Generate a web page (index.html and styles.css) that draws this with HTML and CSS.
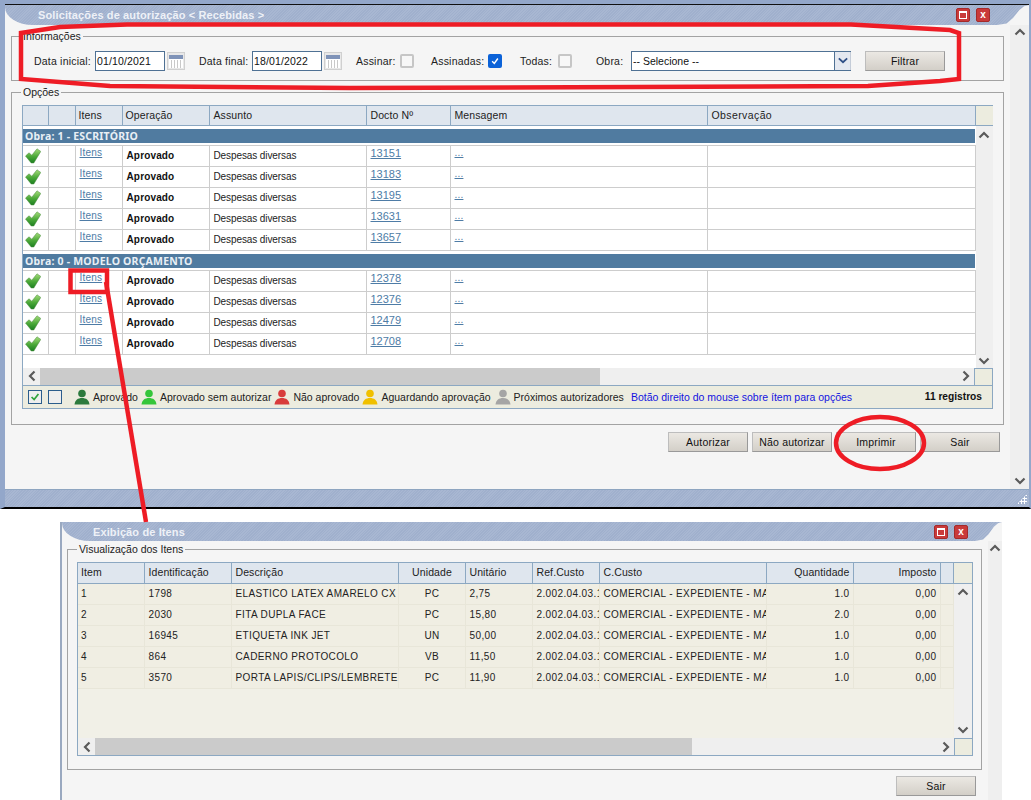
FILE: index.html
```html
<!DOCTYPE html>
<html lang="pt-BR">
<head>
<meta charset="utf-8">
<title>Solicitações de autorização</title>
<link rel="stylesheet" href="styles.css">
</head>
<body>
<svg width="0" height="0" class="defs">
  <defs>
    <linearGradient id="chk" x1="0" y1="0" x2="0" y2="1"><stop offset="0" stop-color="#a5dc7a"/><stop offset=".55" stop-color="#4aa838"/><stop offset="1" stop-color="#1c7f20"/></linearGradient>
    <symbol id="check" viewBox="0 0 16 16"><path d="M.5 8 L4 4.800 L6.800 7.200 L12 .8 L15.800 3.400 L8.800 15 L6.200 15 Z" fill="url(#chk)" stroke="#4b8a40" stroke-width=".5" stroke-linejoin="round"/></symbol>
    <symbol id="cal" viewBox="0 0 18 18"><rect x=".5" y=".5" width="17" height="17" fill="#e8e8e8" stroke="#d0d0d0"/><rect x="2" y="3" width="14" height="13" fill="#fff"/><rect x="2" y="3" width="14" height="4" fill="#7f93b8"/><path d="M4.500 8v8M7.500 8v8M10.500 8v8M13.500 8v8" stroke="#c9c9c9"/></symbol>
    <symbol id="user" viewBox="0 0 16 16"><circle cx="8" cy="4.500" r="3.800"/><path d="M.5 15.500 C1 11 4 9 8 9 S15 11 15.500 15.500 Z"/></symbol>
    <symbol id="up" viewBox="0 0 12 8"><path d="M1.500 6.500 L6 2 L10.500 6.500" fill="none" stroke="#5a5a5a" stroke-width="2.200"/></symbol>
    <symbol id="down" viewBox="0 0 12 8"><path d="M1.500 1.500 L6 6 L10.500 1.500" fill="none" stroke="#5a5a5a" stroke-width="2.200"/></symbol>
    <symbol id="left" viewBox="0 0 8 12"><path d="M6.500 1.500 L2 6 L6.500 10.500" fill="none" stroke="#5a5a5a" stroke-width="2.200"/></symbol>
    <symbol id="right" viewBox="0 0 8 12"><path d="M1.500 1.500 L6 6 L1.500 10.500" fill="none" stroke="#5a5a5a" stroke-width="2.200"/></symbol>
  </defs>
</svg>

<section class="win win-main">
  <header class="titlebar">
    <span class="title">Solicitações de autorização &lt; Recebidas &gt;</span>
    <span class="winbtn"><span class="glyph-max"></span></span>
    <span class="winbtn"><span class="glyph-x">x</span></span>
    <span class="tb-end"></span>
  </header>
  <div class="win-body">
    <div class="win-content">
      <fieldset class="box box-info">
        <legend>Informações</legend>
        <div class="filters">
          <label class="fl fl-1">Data inicial:</label><span class="input date">01/10/2021</span><svg class="cal"><use href="#cal"/></svg>
          <label class="fl fl-2">Data final:</label><span class="input date">18/01/2022</span><svg class="cal"><use href="#cal"/></svg>
          <label class="fl fl-3">Assinar:</label><span class="cb"></span>
          <label class="fl fl-4">Assinadas:</label><span class="cb cb-on"><svg viewBox="0 0 14 14"><path d="M3 7.500 L6 10.500 L11 3.500" fill="none" stroke="#fff" stroke-width="2"/></svg></span>
          <label class="fl fl-5">Todas:</label><span class="cb"></span>
          <label class="fl fl-6">Obra:</label>
          <span class="select"><span class="select-val">-- Selecione --</span><span class="select-arrow"><svg viewBox="0 0 12 8" width="10" height="7"><path d="M1 1.500 L6 6 L11 1.500" fill="none" stroke="#2f4f86" stroke-width="2.200"/></svg></span></span>
          <button class="btn btn-filter">Filtrar</button>
        </div>
      </fieldset>

      <fieldset class="box box-opts">
        <legend>Opções</legend>
        <div class="grid-wrap wrap-main">
          <table class="grid grid-main">
            <colgroup><col class="c25"><col class="c27"><col class="c47"><col class="c87"><col class="c157"><col class="c84"><col class="c257"><col class="c268"><col class="c18"></colgroup>
            <thead><tr><th></th><th></th><th>Itens</th><th>Operação</th><th>Assunto</th><th>Docto Nº</th><th>Mensagem</th><th class="th-obs">Observação</th><th class="corner-th"></th></tr></thead>
            <tbody>
              <tr class="gap gap-top"><td colspan="8"></td><td rowspan="16" class="vs-cell"><div class="vscroll"><svg class="chv"><use href="#up"/></svg><svg class="chv"><use href="#down"/></svg></div></td></tr>
              <tr class="group"><td colspan="8">Obra: 1 - ESCRITÓRIO</td></tr>
              <tr class="gap gap-line"><td colspan="8"></td></tr>
              <tr><td class="ic"><svg class="ok"><use href="#check"/></svg></td><td></td><td class="lk"><a>Itens</a></td><td class="b">Aprovado</td><td>Despesas diversas</td><td class="lk lk-num"><a>13151</a></td><td class="lk"><a>...</a></td><td></td></tr>
              <tr><td class="ic"><svg class="ok"><use href="#check"/></svg></td><td></td><td class="lk"><a>Itens</a></td><td class="b">Aprovado</td><td>Despesas diversas</td><td class="lk lk-num"><a>13183</a></td><td class="lk"><a>...</a></td><td></td></tr>
              <tr><td class="ic"><svg class="ok"><use href="#check"/></svg></td><td></td><td class="lk"><a>Itens</a></td><td class="b">Aprovado</td><td>Despesas diversas</td><td class="lk lk-num"><a>13195</a></td><td class="lk"><a>...</a></td><td></td></tr>
              <tr><td class="ic"><svg class="ok"><use href="#check"/></svg></td><td></td><td class="lk"><a>Itens</a></td><td class="b">Aprovado</td><td>Despesas diversas</td><td class="lk lk-num"><a>13631</a></td><td class="lk"><a>...</a></td><td></td></tr>
              <tr><td class="ic"><svg class="ok"><use href="#check"/></svg></td><td></td><td class="lk"><a>Itens</a></td><td class="b">Aprovado</td><td>Despesas diversas</td><td class="lk lk-num"><a>13657</a></td><td class="lk"><a>...</a></td><td></td></tr>
              <tr class="gap gap-top"><td colspan="8"></td></tr>
              <tr class="group"><td colspan="8">Obra: 0 - MODELO ORÇAMENTO</td></tr>
              <tr class="gap gap-line"><td colspan="8"></td></tr>
              <tr><td class="ic"><svg class="ok"><use href="#check"/></svg></td><td></td><td class="lk"><a>Itens</a></td><td class="b">Aprovado</td><td>Despesas diversas</td><td class="lk lk-num"><a>12378</a></td><td class="lk"><a>...</a></td><td></td></tr>
              <tr><td class="ic"><svg class="ok"><use href="#check"/></svg></td><td></td><td class="lk"><a>Itens</a></td><td class="b">Aprovado</td><td>Despesas diversas</td><td class="lk lk-num"><a>12376</a></td><td class="lk"><a>...</a></td><td></td></tr>
              <tr><td class="ic"><svg class="ok"><use href="#check"/></svg></td><td></td><td class="lk"><a>Itens</a></td><td class="b">Aprovado</td><td>Despesas diversas</td><td class="lk lk-num"><a>12479</a></td><td class="lk"><a>...</a></td><td></td></tr>
              <tr><td class="ic"><svg class="ok"><use href="#check"/></svg></td><td></td><td class="lk"><a>Itens</a></td><td class="b">Aprovado</td><td>Despesas diversas</td><td class="lk lk-num"><a>12708</a></td><td class="lk"><a>...</a></td><td></td></tr>
              <tr class="filler"><td colspan="8"></td></tr>
            </tbody>
          </table>
          <div class="hscroll hs-main">
            <span class="hs-btn"><svg class="chh"><use href="#left"/></svg></span>
            <span class="hs-track"><span class="hs-thumb thumb-main"></span></span>
            <span class="hs-btn"><svg class="chh"><use href="#right"/></svg></span>
            <span class="hs-corner"></span>
          </div>
          <div class="legendbar">
            <span class="lg-cb lg-cb-on"><svg viewBox="0 0 14 14"><path d="M3 7 L6 10 L11 3.500" fill="none" stroke="#2fa33c" stroke-width="2"/></svg></span>
            <span class="lg-cb lg-cb-off"></span>
            <svg class="person p-dg"><use href="#user"/></svg><span class="lg-t">Aprovado</span>
            <svg class="person p-g"><use href="#user"/></svg><span class="lg-t">Aprovado sem autorizar</span>
            <svg class="person p-r"><use href="#user"/></svg><span class="lg-t">Não aprovado</span>
            <svg class="person p-y"><use href="#user"/></svg><span class="lg-t">Aguardando aprovação</span>
            <svg class="person p-gr"><use href="#user"/></svg><span class="lg-t">Próximos autorizadores</span>
            <span class="lg-hint">Botão direito do mouse sobre ítem para opções</span>
            <span class="lg-count">11 registros</span>
          </div>
        </div>
      </fieldset>

      <div class="actions">
        <button class="btn">Autorizar</button>
        <button class="btn">Não autorizar</button>
        <button class="btn">Imprimir</button>
        <button class="btn">Sair</button>
      </div>
    </div>
    <div class="side-scroll"><svg class="chv"><use href="#up"/></svg><svg class="chv"><use href="#down"/></svg></div>
  </div>
  <footer class="statusbar"><span class="grip"></span></footer>
</section>

<section class="win win-items">
  <header class="titlebar tb-items">
    <span class="title">Exibição de Itens</span>
    <span class="winbtn"><span class="glyph-max"></span></span>
    <span class="winbtn"><span class="glyph-x">x</span></span>
    <span class="tb-end"></span>
  </header>
  <div class="win-body">
    <div class="win-content content-items">
      <fieldset class="box box-items">
        <legend>Visualização dos Itens</legend>
        <div class="grid-wrap wrap-items">
          <table class="grid grid-items">
            <colgroup><col class="i66"><col class="i87"><col class="i167"><col class="i67"><col class="i67"><col class="i67"><col class="i167"><col class="i87"><col class="i87"><col class="i13"><col class="i19"></colgroup>
            <thead><tr><th>Item</th><th>Identificação</th><th>Descrição</th><th class="ctr">Unidade</th><th>Unitário</th><th>Ref.Custo</th><th>C.Custo</th><th class="rgt">Quantidade</th><th class="rgt">Imposto</th><th></th><th class="corner-th"></th></tr></thead>
            <tbody>
              <tr><td>1</td><td>1798</td><td>ELASTICO LATEX AMARELO CX</td><td class="ctr">PC</td><td>2,75</td><td>2.002.04.03.1</td><td>COMERCIAL - EXPEDIENTE - MAT</td><td class="rgt">1.0</td><td class="rgt">0,00</td><td></td><td rowspan="6" class="vs-cell"><div class="vscroll"><svg class="chv"><use href="#up"/></svg><svg class="chv"><use href="#down"/></svg></div></td></tr>
              <tr><td>2</td><td>2030</td><td>FITA DUPLA FACE</td><td class="ctr">PC</td><td>15,80</td><td>2.002.04.03.1</td><td>COMERCIAL - EXPEDIENTE - MAT</td><td class="rgt">2.0</td><td class="rgt">0,00</td><td></td></tr>
              <tr><td>3</td><td>16945</td><td>ETIQUETA INK JET</td><td class="ctr">UN</td><td>50,00</td><td>2.002.04.03.1</td><td>COMERCIAL - EXPEDIENTE - MAT</td><td class="rgt">1.0</td><td class="rgt">0,00</td><td></td></tr>
              <tr><td>4</td><td>864</td><td>CADERNO PROTOCOLO</td><td class="ctr">VB</td><td>11,50</td><td>2.002.04.03.1</td><td>COMERCIAL - EXPEDIENTE - MAT</td><td class="rgt">1.0</td><td class="rgt">0,00</td><td></td></tr>
              <tr><td>5</td><td>3570</td><td>PORTA LAPIS/CLIPS/LEMBRETE</td><td class="ctr">PC</td><td>11,90</td><td>2.002.04.03.1</td><td>COMERCIAL - EXPEDIENTE - MAT</td><td class="rgt">1.0</td><td class="rgt">0,00</td><td></td></tr>
              <tr class="items-fill"><td colspan="10"></td></tr>
            </tbody>
          </table>
          <div class="hscroll hs-items">
            <span class="hs-btn"><svg class="chh"><use href="#left"/></svg></span>
            <span class="hs-track"><span class="hs-thumb thumb-items"></span></span>
            <span class="hs-btn"><svg class="chh"><use href="#right"/></svg></span>
            <span class="hs-corner"></span>
          </div>
        </div>
      </fieldset>
      <div class="actions actions-items"><button class="btn">Sair</button></div>
    </div>
    <div class="side-scroll side-items"><svg class="chv"><use href="#up"/></svg></div>
  </div>
</section>

<svg class="marks" viewBox="0 0 1031 800" aria-hidden="true">
  <path class="mk" d="M127 24.500 L851 24.500 L896 27 L950 30 L959 33 L959 79 L940 81 L868 86 L350 88 L110 86 L21 79 L21 33 L60 27 Z"/>
  <rect class="mk" x="70.500" y="270.500" width="36.500" height="21.500"/>
  <path class="mk" d="M106 282 L146 522"/>
  <ellipse class="mk" cx="880" cy="443" rx="44" ry="26"/>
</svg>
</body>
</html>
```
FILE: styles.css
```css
* { box-sizing: border-box; }
html, body { margin: 0; padding: 0; }
body {
  width: 1031px; height: 800px; position: relative; overflow: hidden;
  background: #fff; color: #111;
  font: 11px "Liberation Sans", Arial, sans-serif;
}
.defs { position: absolute; }

.win { position: absolute; display: flex; flex-direction: column; background: #f5f5f5; }
.win-main {
  left: 0; top: 0; width: 1031px; height: 509px;
  border-style: solid; border-color: #93a7ca #93a7ca #000;
  border-width: 4px 2px 2px 5px;
}
.win-main > .titlebar { border-top: 1px solid #111; }
.win-items { left: 60px; top: 522px; width: 942px; height: 278px; border-left: 2px solid #9aa9c0; }

.titlebar {
  height: 21px; flex: none; display: flex; align-items: center; gap: 7px; padding-left: 33px;
  background: repeating-linear-gradient(135deg, #a0b0cd 0 1px, #a8b7d2 1px 2px);
  border-bottom-left-radius: 28px 18px;
}
.tb-items { height: 19px; padding-left: 31px; }
.title { flex: 1; color: #eef1f7; font-weight: bold; font-size: 11px; letter-spacing: .12px; }
.winbtn {
  width: 14px; height: 14px; flex: none; border-radius: 2px;
  background: #c93a3a; border: 1px solid #a52a2a;
  display: flex; align-items: center; justify-content: center;
}
.winbtn + .winbtn { margin-left: -1px; }
.glyph-max { width: 8px; height: 8px; border: 1px solid #fff; border-top-width: 2px; background: #c93a3a; }
.glyph-x { color: #fff; font-weight: bold; font-size: 10px; line-height: 10px; }
.tb-end {
  width: 32px; height: 100%; flex: none; background: #f5f5f5;
  clip-path: polygon(100% 0, 85% 6%, 70% 25%, 50% 65%, 30% 92%, 0 100%, 100% 100%);
}
.tb-items .tb-end { width: 27px; }

.win-body { flex: 1; display: flex; min-height: 0; background: #f5f5f5; }
.win-content { flex: 1; padding: 6px 0 0 6px; min-width: 0; }
.side-scroll {
  width: 19px; flex: none; background: #efefef; display: flex; flex-direction: column;
  justify-content: space-between; align-items: center; padding: 3px 0 4px;
}
.chv { width: 12px; height: 8px; display: block; flex: none; }
.chh { width: 8px; height: 12px; display: block; margin: 0 auto; }
.statusbar {
  height: 18px; flex: none; position: relative;
  background: repeating-linear-gradient(135deg, #a0b0cd 0 1px, #a8b7d2 1px 2px);
  border-top: 1px solid #8ea5c0;
}
.grip { position: absolute; right: 2px; bottom: 3px; width: 10px; height: 10px;
  background: radial-gradient(circle, #fff 1px, transparent 1.300px) 0 0 / 3px 3px;
  clip-path: polygon(100% 0, 100% 100%, 0 100%); }

.box { margin: 0; padding: 0; border: 1px solid #a3a3a3; min-width: 0; }
.box legend { padding: 0 2px; margin-left: 9px; font-size: 10.500px; line-height: 11px; color: #222; }
.box-info { height: 50px; width: 993px; }
.box-opts { height: 338px; margin-top: 6px; width: 993px; }

.filters { display: flex; align-items: center; height: 37px; padding: 0 0 0 22px; }
.fl { font-size: 10.500px; letter-spacing: .2px; color: #222; white-space: nowrap; }
.fl-1 { width: 61px; }
.fl-2 { margin-left: 14px; width: 53px; }
.fl-3 { margin-left: 14px; width: 44px; }
.fl-4 { margin-left: 17px; width: 57px; }
.fl-5 { margin-left: 18px; width: 38px; }
.fl-6 { margin-left: 24px; width: 35px; }
.input { height: 20px; border: 1px solid #4f7194; background: #fff; display: flex; align-items: center; padding-left: 1px; font-size: 10.500px; letter-spacing: .15px; }
.date { width: 70px; }
.cal { width: 18px; height: 18px; margin-left: 2px; flex: none; }
.cb { width: 14px; height: 14px; border: 2px solid #c6c6c6; border-radius: 2px; background: #f7f7f7; flex: none; }
.cb-on { background: #0b62d8; border-color: #0b62d8; }
.cb-on svg { display: block; width: 100%; height: 100%; }
.select { width: 220px; height: 20px; display: flex; border: 1px solid #4f7194; border-right: 0; background: #fff; flex: none; }
.select-val { flex: 1; font-size: 10.500px; padding-left: 1px; line-height: 18px; letter-spacing: 0; }
.select-arrow { width: 17px; background: #e4e8f0; border: 1px solid #c4ccd8; border-width: 0 1px 0 1px; display: flex; align-items: center; justify-content: center; border-left-color: #4f7194; }
.btn {
  width: 80px; height: 20px; padding: 0; font: 10.500px "Liberation Sans", Arial, sans-serif; letter-spacing: .2px; color: #111;
  background: linear-gradient(#ebe8e3, #d3cfc8); border: 1px solid; border-color: #bdbdbd #999 #999 #bdbdbd;
}
.btn-filter { margin-left: 14px; }

.grid-wrap { margin: 7px 0 0 10px; border: 1px solid #8ca8c2; }
.wrap-main { width: 971px; }
.grid { border-collapse: collapse; table-layout: fixed; width: 100%; }
.grid th { height: 19px; background: #dfe6ee; font-weight: normal; text-align: left; padding: 0 3px 1px; border: 1px solid #8ca8c2; border-top: 0; font-size: 10.500px; letter-spacing: .1px; color: #222; }
.grid th:first-child { border-left: 0; }
.grid th:last-child { border-right: 0; }
.grid-main th:nth-child(n+5), .grid-items th:nth-child(n+2) { padding-left: 4px; }
.grid .th-obs { letter-spacing: .4px; }
.grid .corner-th { background: #ececdf; }
.c25 { width: 25px; } .c27 { width: 27px; } .c47 { width: 47px; } .c87 { width: 87px; } .c157 { width: 157px; }
.c84 { width: 84px; } .c257 { width: 257px; } .c268 { width: 268px; } .c18 { width: 18px; }

.grid-main { background: #fff; }
.grid-main td { height: 21px; padding: 0 3px 0 4px; border: 1px solid #cdcdcd; border-width: 0 1px 1px 1px; overflow: hidden; white-space: nowrap; font-size: 10px; letter-spacing: -.1px; color: #222; }
.grid-main td:first-child { border-left: 0; }
.grid-main .gap td { padding: 0; border: 0; background: #fff; font-size: 0; line-height: 0; }
.grid-main .gap-top td { height: 4px; }
.grid-main .gap-line td { height: 2px; border-bottom: 1px solid #cdcdcd; }
.grid-main .group td { height: 14px; padding: 0 2px; border: 0; background: #507ba0; color: #e8eff5; font-weight: bold; font-family: "Noto Sans", sans-serif; font-size: 10.500px; line-height: 13px; letter-spacing: .2px; }
.grid-main .filler td { height: 13px; border: 0; }
.grid-main .vs-cell, .grid-items .vs-cell { padding: 0; border: 0; vertical-align: top; background: #efefef; }
.grid-main td.ic { padding: 0 0 0 2px; }
.ok { width: 16px; height: 16px; display: block; }
.grid-main td.b { font-weight: bold; color: #111; letter-spacing: .15px; }
.grid-main td.lk { vertical-align: top; padding-top: 1px; }
.lk a { color: #4e7ca6; text-decoration: underline; font-size: 10px; letter-spacing: .2px; }
.lk-num a { font-size: 11px; letter-spacing: 0; }
.vscroll { display: flex; flex-direction: column; justify-content: space-between; align-items: center; background: #efefef; }
.grid-main .vscroll { height: 242px; padding: 5px 0 3px; }

.hscroll { display: flex; align-items: center; height: 17px; background: #efefef; }
.hs-main { height: 17px; }
.hs-btn { width: 17px; flex: none; background: #efefef; }
.hs-track { flex: 1; height: 100%; background: #efefef; display: block; }
.hs-thumb { display: block; height: 100%; background: #cbcbcb; }
.thumb-main { width: 560px; }
.thumb-items { width: 597px; }
.hs-corner { width: 18px; height: 100%; flex: none; background: #ececdf; border-left: 1px solid #8ca8c2; border-top: 1px solid #8ca8c2; }

.legendbar { display: flex; align-items: center; height: 23px; background: #ececdf; padding: 0 10px 0 5px; border-top: 1px solid #8ca8c2; font-size: 10.500px; color: #222; white-space: nowrap; }
.lg-cb { width: 14px; height: 14px; border: 1px solid #2b5d8c; background: #eee; flex: none; margin-right: 6px; display: block; }
.lg-cb svg { display: block; width: 100%; height: 100%; }
.person { width: 16px; height: 16px; flex: none; margin-right: 3px; }
.p-dg { fill: #2c7a3d; margin-left: 6px; }
.p-g { fill: #35c63a; margin-left: 3px; }
.p-r { fill: #d83c3c; margin-left: 3px; }
.p-y { fill: #f0c000; margin-left: 3px; }
.p-gr { fill: #a5a5a5; margin-left: 4px; }
.lg-hint { color: #1414e0; margin-left: 7px; }
.lg-count { margin-left: auto; font-weight: bold; color: #111; font-size: 10.200px; }

.actions { display: flex; justify-content: flex-end; gap: 4px; margin: 7px 0 0; width: 989px; }

.content-items { padding: 3px 0 0 5px; }
.side-items { width: 14px; padding-top: 3px; }
.box-items { height: 226px; width: 915px; }
.wrap-items { width: 896px; margin: 7px 0 0 9px; }
.grid-items { background: #f0eee3; }
.grid-items th { height: 20px; }
.grid-items td { height: 21px; padding: 0 3px 0 4px; border: 1px solid #e8e6d9; border-width: 0 1px 1px 1px; white-space: nowrap; overflow: hidden; font-size: 10px; letter-spacing: .38px; color: #222; }
.grid-items td:first-child { border-left: 0; padding-left: 3px; }
.grid-items .items-fill td { height: 50px; border: 0; background: #f1f0e7; }
.grid-items .vscroll { height: 154px; padding: 4px 0 4px; }
.grid-items td.vs-cell { padding: 0; border: 0; }
.ctr { text-align: center !important; }
.rgt { text-align: right !important; }
.i66 { width: 66px; } .i87 { width: 87px; } .i167 { width: 167px; } .i67 { width: 67px; } .i13 { width: 13px; } .i19 { width: 19px; }
.actions-items { width: 909px; margin-top: 6px; }

.marks { position: absolute; left: 0; top: 0; width: 1031px; height: 800px; pointer-events: none; }
.mk { fill: none; stroke: #ee1c25; stroke-width: 4.500; }
```
